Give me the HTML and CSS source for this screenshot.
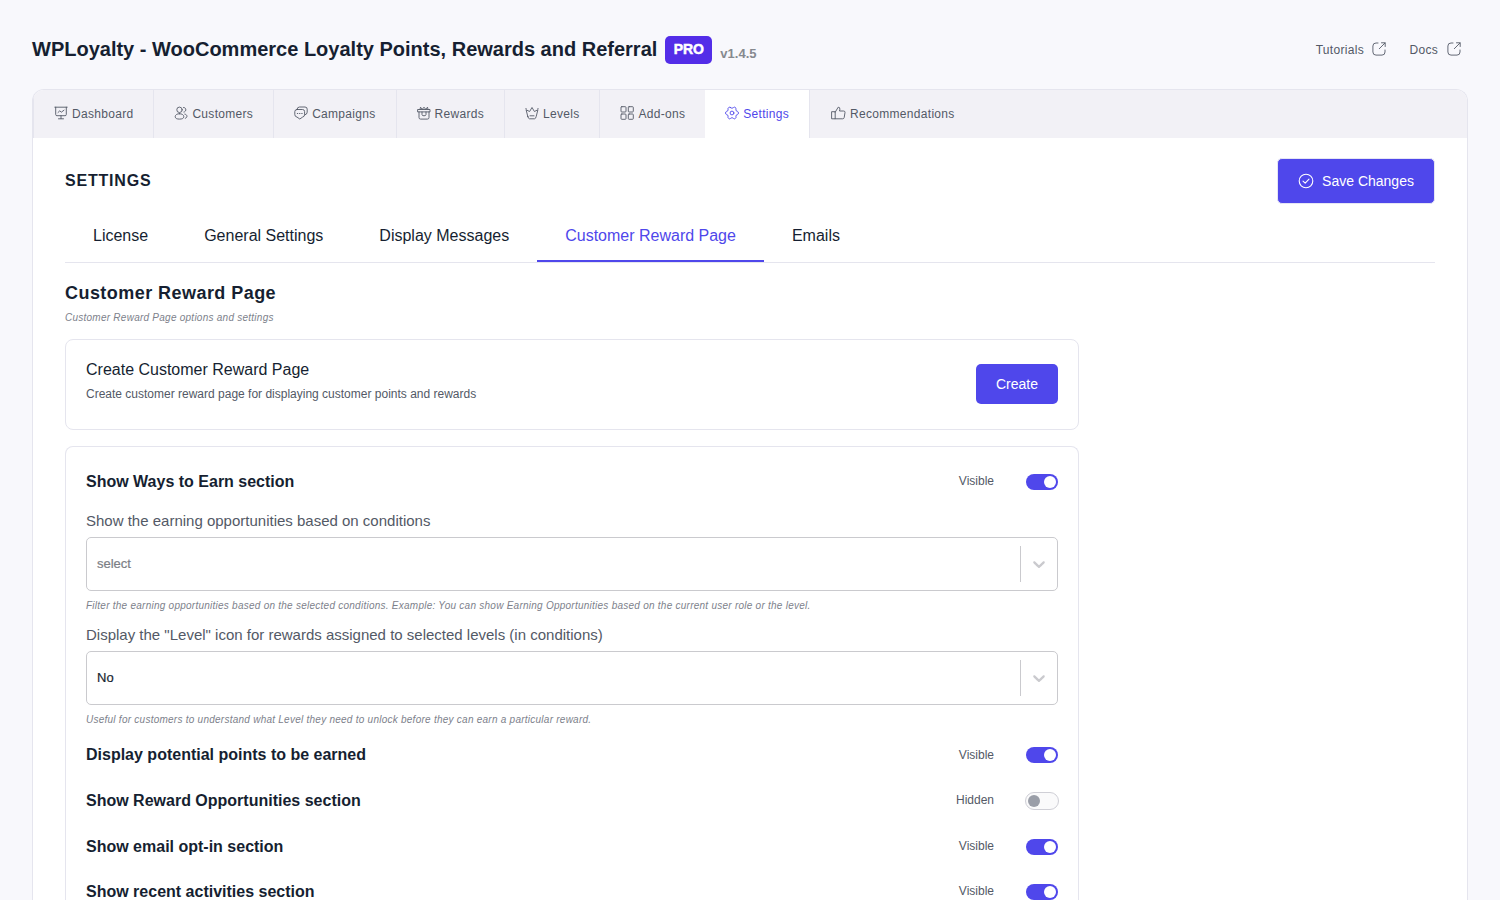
FILE: index.html
```html
<!DOCTYPE html>
<html lang="en">
<head>
<meta charset="UTF-8">
<title>WPLoyalty - Settings</title>
<link rel="stylesheet" href="styles.css">
</head>
<body>
  <header class="top-header">
    <div class="brand">
      <h1>WPLoyalty - WooCommerce Loyalty Points, Rewards and Referral</h1>
      <span class="pro">PRO</span>
      <span class="version">v1.4.5</span>
    </div>
    <div class="links">
      <a>Tutorials
        <svg class="icon" viewBox="0 0 14 14"><path d="M6 1H4Q.9 1 .9 4v6q0 3.100 3.100 3.100h6q3 0 3-3.100V8M7.300 6.700 13 1M9.500.8H13.200V4.500"/></svg>
      </a>
      <a>Docs
        <svg class="icon" viewBox="0 0 14 14"><path d="M6 1H4Q.9 1 .9 4v6q0 3.100 3.100 3.100h6q3 0 3-3.100V8M7.300 6.700 13 1M9.500.8H13.200V4.500"/></svg>
      </a>
    </div>
  </header>

  <div class="panel">
    <nav class="main-nav">
      <a class="tab">
        <svg class="icon" viewBox="0 0 14 14"><path d="M.8 1.200H13.200M1.700 1.200V8.500q0 1.200 1.200 1.200h8.200q1.200 0 1.200-1.200V1.200M7 9.700v2.800M4.500 12.800h5M4 6.500 5.800 4.800 7.300 6.200 10 4.200"/></svg>
        Dashboard
      </a>
      <a class="tab">
        <svg class="icon" viewBox="0 0 14 14"><circle cx="5.500" cy="3.800" r="2.700"/><path d="M5.500 7.700C2.900 7.700 1.200 9 1.200 10.700s1.700 2.400 4.300 2.400 4.300-.7 4.300-2.400S8.100 7.700 5.500 7.700zM9.500 1.500c3.100-.3 3.300 4.300.4 4.600M10.800 8.100c2.800.3 3 3.600.5 4.200"/></svg>
        Customers
      </a>
      <a class="tab">
        <svg class="icon" viewBox="0 0 14 14"><path d="M3 3.500h5.500Q10.600 3.500 10.600 5.600v3q0 2-2 2.500L5.800 13 3 11.100Q.8 10.600.8 8.600v-3Q.8 3.500 3 3.500zM3 3.300Q3.300 1 5.500 1H11q2.200 0 2.200 2.200v3q0 2.200-2.500 2.800M3.300 7.500h.5M5.500 7.500H6M7.700 7.500h.5"/></svg>
        Campaigns
      </a>
      <a class="tab">
        <svg class="icon" viewBox="0 0 14 14"><path d="M1 3.500h12v2.400H1zM2 5.900v5.600q0 1.600 1.600 1.600h6.800q1.600 0 1.600-1.600V5.900M3 3.500 3.500 1.200 5.300 3.300 7 1.200 8.700 3.300 10.500 1.200 11 3.500M5 6v2.500q0 1.300 2 1.300t2-1.300V6"/></svg>
        Rewards
      </a>
      <a class="tab">
        <svg class="icon" viewBox="0 0 14 14"><path d="M2.800 10.500 1.100 3.800 4.600 5.500 7 1.500l2.400 4L12.900 3.800l-1.700 6.700q-.5 2.300-1.700 2.300h-5q-1.200 0-1.700-2.300zM5 9.800h4M.7 2.800h.6M12.700 2.800h.6"/></svg>
        Levels
      </a>
      <a class="tab">
        <svg class="icon" viewBox="0 0 14 14"><rect x="1" y=".7" width="5" height="5.300" rx=".8"/><rect x="8.300" y=".7" width="5" height="5.300" rx=".8"/><rect x="1" y="8" width="5" height="5.300" rx=".8"/><rect x="8.300" y="8" width="5" height="5.300" rx=".8"/></svg>
        Add-ons
      </a>
      <a class="tab active">
        <svg class="icon" viewBox="0 0 14 14"><circle cx="7" cy="7" r="1.900"/><path d="M5.400 1.500Q7 3.300 8.600 1.500Q9.300.7 10.300 1.500Q11.400 2.100 10.900 3.100Q10.500 5.200 12.500 5.400Q13.400 5.700 13.400 7T12.500 8.600Q10.500 8.800 10.900 10.900Q11.400 11.900 10.300 12.500Q9.300 13.300 8.600 12.500Q7 10.700 5.400 12.500Q4.700 13.300 3.700 12.500Q2.600 11.900 3.100 10.900Q3.500 8.800 1.500 8.600Q.6 8.300.6 7T1.500 5.400Q3.500 5.200 3.100 3.100Q2.600 2.100 3.700 1.500Q4.700.7 5.400 1.500z"/></svg>
        Settings
      </a>
      <a class="tab last">
        <svg class="icon wide" viewBox="0 0 15 14"><path d="M1 5.700h3.200v7.100H1zM4.200 6.200 7.200 1.200q1.900 0 1.700 2L8.500 5h4q1.700 0 1.500 1.500l-.8 5q-.2 1.300-1.600 1.300H4.200"/></svg>
        Recommendations
      </a>
    </nav>

    <main class="content">
      <div class="title-row">
        <h2>SETTINGS</h2>
        <button class="btn save">
          <svg class="icon" viewBox="0 0 16 16"><circle cx="8" cy="8" r="6.800"/><path d="M5 8.100 7.200 10.200 11 6.200"/></svg>
          Save Changes
        </button>
      </div>

      <div class="sub-nav">
        <a>License</a>
        <a>General Settings</a>
        <a>Display Messages</a>
        <a class="active">Customer Reward Page</a>
        <a>Emails</a>
      </div>

      <h3>Customer Reward Page</h3>
      <p class="hint">Customer Reward Page options and settings</p>

      <section class="card create-card">
        <div>
          <p class="card-title">Create Customer Reward Page</p>
          <p class="card-text">Create customer reward page for displaying customer points and rewards</p>
        </div>
        <button class="btn create">Create</button>
      </section>

      <section class="card options">
        <div class="row">
          <h4>Show Ways to Earn section</h4>
          <span class="state">Visible</span>
          <span class="toggle on"></span>
        </div>

        <label class="field-label">Show the earning opportunities based on conditions</label>
        <div class="select">
          <span class="value placeholder">select</span>
          <span class="arrow"><svg viewBox="0 0 20 20"><path d="M4.516 7.548c0.436-0.446 1.043-0.481 1.576 0l3.908 3.747 3.908-3.747c0.533-0.481 1.141-0.446 1.574 0 0.436 0.445 0.408 1.197 0 1.615-0.406 0.418-4.695 4.502-4.695 4.502-0.217 0.223-0.502 0.335-0.787 0.335s-0.570-0.112-0.789-0.335c0 0-4.287-4.084-4.695-4.502s-0.436-1.170 0-1.615z"/></svg></span>
        </div>
        <p class="hint">Filter the earning opportunities based on the selected conditions. Example: You can show Earning Opportunities based on the current user role or the level.</p>

        <label class="field-label">Display the "Level" icon for rewards assigned to selected levels (in conditions)</label>
        <div class="select">
          <span class="value">No</span>
          <span class="arrow"><svg viewBox="0 0 20 20"><path d="M4.516 7.548c0.436-0.446 1.043-0.481 1.576 0l3.908 3.747 3.908-3.747c0.533-0.481 1.141-0.446 1.574 0 0.436 0.445 0.408 1.197 0 1.615-0.406 0.418-4.695 4.502-4.695 4.502-0.217 0.223-0.502 0.335-0.787 0.335s-0.570-0.112-0.789-0.335c0 0-4.287-4.084-4.695-4.502s-0.436-1.170 0-1.615z"/></svg></span>
        </div>
        <p class="hint">Useful for customers to understand what Level they need to unlock before they can earn a particular reward.</p>

        <div class="row">
          <h4>Display potential points to be earned</h4>
          <span class="state">Visible</span>
          <span class="toggle on"></span>
        </div>
        <div class="row">
          <h4>Show Reward Opportunities section</h4>
          <span class="state">Hidden</span>
          <span class="toggle"></span>
        </div>
        <div class="row">
          <h4>Show email opt-in section</h4>
          <span class="state">Visible</span>
          <span class="toggle on"></span>
        </div>
        <div class="row">
          <h4>Show recent activities section</h4>
          <span class="state">Visible</span>
          <span class="toggle on"></span>
        </div>
      </section>
    </main>
  </div>
</body>
</html>
```

FILE: styles.css
```css
* {
  box-sizing: border-box;
}
body {
  font-family: "Liberation Sans", Arial, sans-serif;
  margin: 0;
  padding: 0 32px;
  height: 900px;
  overflow: hidden;
  background-color: #f8f8fc;
  color: #161f31;
}
h1, h2, h3, h4, p {
  margin: 0;
}
.icon {
  width: 14px;
  height: 14px;
  flex: none;
  fill: none;
  stroke: currentColor;
  stroke-width: 0.9;
  stroke-linecap: round;
  stroke-linejoin: round;
}

/* header */
.top-header {
  display: flex;
  justify-content: space-between;
  height: 89px;
  padding: 36px 7.500px 0 0;
}
.brand {
  display: flex;
  align-items: flex-start;
  gap: 8px;
}
.brand h1 {
  font-size: 20px;
  line-height: 27px;
}
.pro {
  width: 47px;
  height: 28px;
  border-radius: 5px;
  background-color: #532de8;
  color: #fff;
  font-size: 14px;
  font-weight: bold;
  line-height: 27px;
  text-align: center;
  -webkit-text-stroke: 0.5px #fff;
}
.version {
  color: #86898f;
  font-size: 13px;
  font-weight: bold;
  line-height: 36px;
}
.links {
  display: flex;
  gap: 23px;
  height: 28px;
}
.links a {
  display: flex;
  align-items: center;
  gap: 8.500px;
  color: #535966;
  font-size: 12px;
  letter-spacing: 0.3px;
}
.links .icon {
  margin-top: -3px;
}

/* main panel */
.panel {
  height: 811px;
  border: 1px solid #e5e5ee;
  border-bottom: none;
  border-radius: 12px 12px 0 0;
  background-color: #fff;
  overflow: hidden;
}
.main-nav {
  display: flex;
  height: 48px;
  border-left: 1px solid #e5e5ee;
  background-color: #f2f1f6;
}
.tab {
  display: flex;
  align-items: center;
  gap: 4px;
  padding: 0 20px;
  border-right: 1px solid #e5e5ee;
  color: #535966;
  font-size: 12px;
  letter-spacing: 0.3px;
}
.tab .icon {
  margin-top: -2px;
}
.tab .wide {
  width: 15px;
}
.tab.active {
  margin-left: -1px;
  background-color: #fff;
  color: #4f47eb;
}
.tab.last {
  padding-left: 21px;
  border-right: none;
}

.content {
  padding: 20px 32px 0;
}
.title-row {
  display: flex;
  justify-content: space-between;
  align-items: center;
  height: 46px;
}
.title-row h2 {
  font-size: 16px;
  letter-spacing: 0.8px;
}
.btn {
  display: flex;
  align-items: center;
  justify-content: center;
  border: none;
  border-radius: 5px;
  background-color: #4f47eb;
  color: #fff;
  font-family: inherit;
  font-size: 14px;
}
.save {
  width: 158px;
  height: 46px;
  gap: 8px;
  border: 1px solid #e5e5f5;
}
.save .icon {
  width: 16px;
  height: 16px;
  stroke-width: 1.1;
}
.create {
  width: 82px;
  height: 40px;
  margin-bottom: 2px;
}

.sub-nav {
  display: flex;
  height: 59px;
  border-bottom: 1px solid #e5e5ee;
}
.sub-nav a {
  height: 58px;
  padding: 0 28px;
  font-size: 16px;
  line-height: 63px;
}
.sub-nav .active {
  color: #4f47eb;
  border-bottom: 2px solid #4f47eb;
}

.content h3 {
  margin-top: 18px;
  font-size: 18px;
  line-height: 24px;
  letter-spacing: 0.45px;
}
.hint {
  color: #7d818b;
  font-size: 10px;
  font-style: italic;
  line-height: 14px;
  letter-spacing: 0.25px;
}
.content > .hint {
  margin-top: 6px;
}

/* cards */
.card {
  width: 1014px;
  border: 1px solid #e5e5ee;
  border-radius: 8px;
  padding: 0 20px;
}
.create-card {
  display: flex;
  justify-content: space-between;
  align-items: center;
  height: 91px;
  margin-top: 14px;
}
.card-title {
  font-size: 16px;
  line-height: 20px;
}
.card-text {
  margin: 5px 0 6px;
  color: #535966;
  font-size: 12px;
  line-height: 18px;
}
.options {
  height: 454px;
  margin-top: 16px;
  padding-top: 24px;
  border-bottom: none;
  border-radius: 8px 8px 0 0;
}
.row {
  display: flex;
  align-items: center;
  height: 22px;
  margin-bottom: 23.600px;
}
.row h4 {
  flex: 1;
  font-size: 16px;
}
.state {
  margin-right: 32px;
  padding-bottom: 1.600px;
  color: #535966;
  font-size: 12px;
  line-height: 14px;
}
.toggle {
  display: flex;
  align-items: center;
  width: 34px;
  height: 18px;
  margin: 0 -1px;
  padding: 0 2px;
  border: 1px solid #cfcfd6;
  border-radius: 9px;
  background-color: #fafafb;
}
.toggle::before {
  content: "";
  width: 12px;
  height: 12px;
  border-radius: 50%;
  background-color: #9a9ea8;
}
.toggle.on {
  justify-content: flex-end;
  width: 32px;
  height: 16px;
  margin: 0;
  border: none;
  background-color: #4f47eb;
}
.toggle.on::before {
  background-color: #fff;
}

.options .row:first-child {
  margin-bottom: 17px;
}
.field-label {
  display: block;
  color: #535966;
  font-size: 15px;
  line-height: 22px;
}
.select {
  display: flex;
  align-items: center;
  height: 54px;
  margin-top: 5px;
  border: 1px solid #cacace;
  border-radius: 5px;
}
.value {
  flex: 1;
  padding: 0 0 2px 10px;
  font-size: 13px;
  -webkit-text-stroke: 0.2px currentColor;
}
.placeholder {
  color: #7b7e85;
}
.arrow {
  display: flex;
  align-items: center;
  justify-content: center;
  width: 37px;
  height: 36px;
  border-left: 1px solid #cacace;
}
.arrow svg {
  width: 20px;
  height: 20px;
  fill: #cacace;
}
.select + .hint {
  margin: 8px 0 11px;
}
.hint + .row {
  margin-top: 17.400px;
}
```
